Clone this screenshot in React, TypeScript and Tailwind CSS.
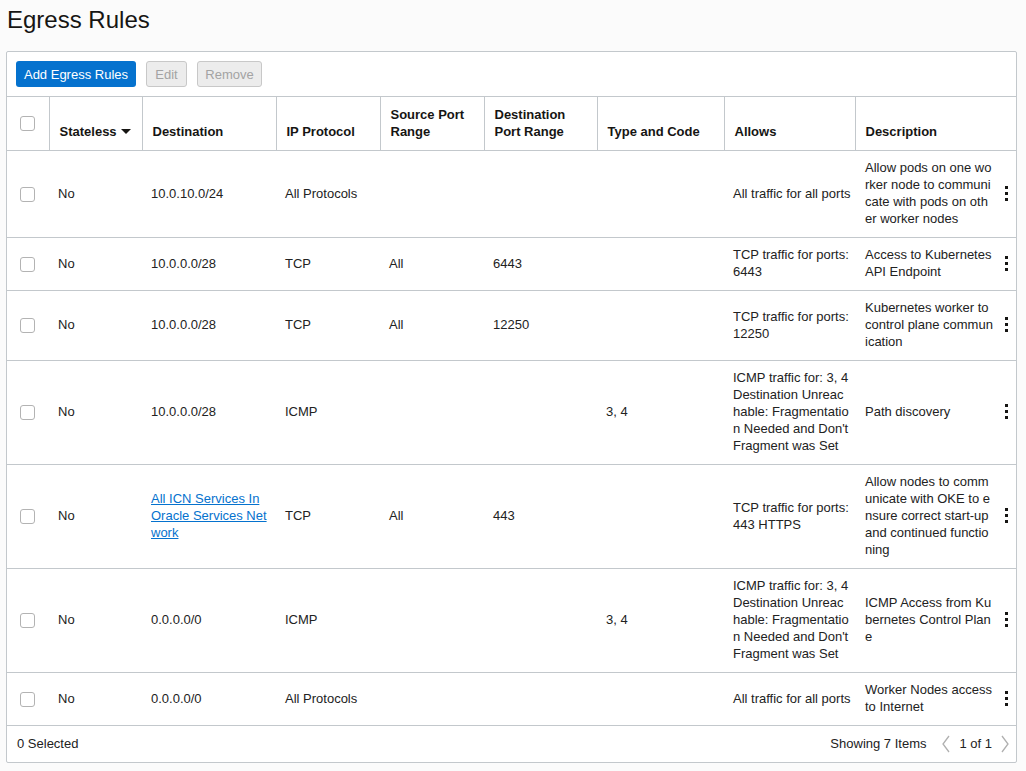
import React from "react";

type Row = {
  dest: string[];
  link?: boolean;
  proto: string;
  src?: string;
  dport?: string;
  type?: string;
  allows: string[];
  desc: string[];
};

const icmpAllows = [
  "ICMP traffic for: 3, 4",
  "Destination Unreac",
  "hable: Fragmentatio",
  "n Needed and Don't",
  "Fragment was Set",
];

const rows: Row[] = [
  {
    dest: ["10.0.10.0/24"],
    proto: "All Protocols",
    allows: ["All traffic for all ports"],
    desc: ["Allow pods on one wo", "rker node to communi", "cate with pods on oth", "er worker nodes"],
  },
  {
    dest: ["10.0.0.0/28"],
    proto: "TCP",
    src: "All",
    dport: "6443",
    allows: ["TCP traffic for ports:", "6443"],
    desc: ["Access to Kubernetes", "API Endpoint"],
  },
  {
    dest: ["10.0.0.0/28"],
    proto: "TCP",
    src: "All",
    dport: "12250",
    allows: ["TCP traffic for ports:", "12250"],
    desc: ["Kubernetes worker to", "control plane commun", "ication"],
  },
  {
    dest: ["10.0.0.0/28"],
    proto: "ICMP",
    type: "3, 4",
    allows: icmpAllows,
    desc: ["Path discovery"],
  },
  {
    dest: ["All ICN Services In", "Oracle Services Net", "work"],
    link: true,
    proto: "TCP",
    src: "All",
    dport: "443",
    allows: ["TCP traffic for ports:", "443 HTTPS"],
    desc: ["Allow nodes to comm", "unicate with OKE to e", "nsure correct start-up", "and continued functio", "ning"],
  },
  {
    dest: ["0.0.0.0/0"],
    proto: "ICMP",
    type: "3, 4",
    allows: icmpAllows,
    desc: ["ICMP Access from Ku", "bernetes Control Plan", "e"],
  },
  {
    dest: ["0.0.0.0/0"],
    proto: "All Protocols",
    allows: ["All traffic for all ports"],
    desc: ["Worker Nodes access", "to Internet"],
  },
];

function Lines({ lines, className = "" }: { lines: string[]; className?: string }) {
  return (
    <div className={className}>
      {lines.map((l, i) => (
        <div key={i} className="whitespace-nowrap">
          {l}
        </div>
      ))}
    </div>
  );
}

function Checkbox() {
  return <div className="w-[15px] h-[15px] rounded-[3px] border border-[#b3b3b3] bg-white" />;
}

function Kebab() {
  return (
    <div className="flex flex-col gap-[3px] items-center w-[4px]">
      <span className="block w-[3px] h-[3px] bg-[#161513]" />
      <span className="block w-[3px] h-[3px] bg-[#161513]" />
      <span className="block w-[3px] h-[3px] bg-[#161513]" />
    </div>
  );
}

export default function App() {
  const th = "border-l border-[#c3c8cc] pl-[10px] pr-2 pt-2 pb-[10px] align-bottom text-left font-bold";
  const td = "px-[9px] pt-[8px] pb-[10px] align-middle";
  return (
    <div
      className="min-h-[771px] bg-[#fbfbfb] text-[#222222] text-[13px] leading-[17px]"
      style={{ fontFamily: '"Liberation Sans", Arial, sans-serif' }}
    >
      <div className="px-[7px] pt-[5px]">
        <h1 className="text-[24px] leading-[29px] font-normal text-[#161513]">Egress Rules</h1>
      </div>
      <div className="mt-[17px] ml-[6px] w-[1011px] border border-[#c3c8cc] rounded-[2px] bg-white">
        <div className="flex gap-[10px] px-[9px] pt-[9px] pb-[9px]">
          <button className="h-[26px] w-[120px] whitespace-nowrap rounded-[3px] bg-[#0572ce] text-white text-[13px]">
            Add Egress Rules
          </button>
          <button className="h-[26px] w-[41px] whitespace-nowrap rounded-[3px] bg-[#ececec] border border-[#c8c8c8] text-[#a3a3a3] text-[13px]">
            Edit
          </button>
          <button className="h-[26px] w-[65px] whitespace-nowrap rounded-[3px] bg-[#ececec] border border-[#c8c8c8] text-[#a3a3a3] text-[13px]">
            Remove
          </button>
        </div>
        <table className="w-full table-fixed border-collapse">
          <colgroup>
            <col className="w-[42px]" />
            <col className="w-[93px]" />
            <col className="w-[134px]" />
            <col className="w-[104px]" />
            <col className="w-[104px]" />
            <col className="w-[113px]" />
            <col className="w-[127px]" />
            <col className="w-[131px]" />
            <col />
          </colgroup>
          <thead>
            <tr className="border-t border-[#c3c8cc] h-[54px] text-[#161513]">
              <th className="pl-[13px] align-middle text-left">
                <Checkbox />
              </th>
              <th className={th}>
                <div className="flex items-center gap-[4px]">
                  <span>Stateless</span>
                  <svg width="10" height="6" viewBox="0 0 10 6">
                    <path d="M0 0 L10 0 L5 5 Z" fill="#161513" />
                  </svg>
                </div>
              </th>
              <th className={th}>Destination</th>
              <th className={th}>IP Protocol</th>
              <th className={th}>
                Source Port
                <br />
                Range
              </th>
              <th className={th}>
                Destination
                <br />
                Port Range
              </th>
              <th className={th}>Type and Code</th>
              <th className={th}>Allows</th>
              <th className={th}>Description</th>
            </tr>
          </thead>
          <tbody>
            {rows.map((r, i) => (
              <tr key={i} className="border-t border-[#c3c8cc]">
                <td className="pl-[13px] py-[9px] align-middle">
                  <Checkbox />
                </td>
                <td className={td}>No</td>
                <td className={td}>
                  {r.link ? (
                    <Lines lines={r.dest} className="text-[#0572ce] underline" />
                  ) : (
                    <Lines lines={r.dest} />
                  )}
                </td>
                <td className={td}>{r.proto}</td>
                <td className={td}>{r.src ?? ""}</td>
                <td className={td}>{r.dport ?? ""}</td>
                <td className={td}>{r.type ?? ""}</td>
                <td className={td}>
                  <Lines lines={r.allows} />
                </td>
                <td className="pl-[10px] pr-[8px] pt-[8px] pb-[10px] align-middle">
                  <div className="flex items-center justify-between">
                    <Lines lines={r.desc} />
                    <Kebab />
                  </div>
                </td>
              </tr>
            ))}
          </tbody>
        </table>
        <div className="border-t border-[#c3c8cc] h-[37px] flex items-center justify-between pl-[10px] pr-[6px] pb-[1px]">
          <span>0 Selected</span>
          <div className="flex items-center">
            <span>Showing 7 Items</span>
            <svg className="ml-[15px]" width="10" height="18" viewBox="0 0 10 18">
              <path d="M8 1 L2 9 L8 17" fill="none" stroke="#b0b0b0" strokeWidth="1.3" />
            </svg>
            <span className="ml-[8px]">1 of 1</span>
            <svg className="ml-[8px]" width="10" height="18" viewBox="0 0 10 18">
              <path d="M2 1 L8 9 L2 17" fill="none" stroke="#b0b0b0" strokeWidth="1.3" />
            </svg>
          </div>
        </div>
      </div>
    </div>
  );
}
